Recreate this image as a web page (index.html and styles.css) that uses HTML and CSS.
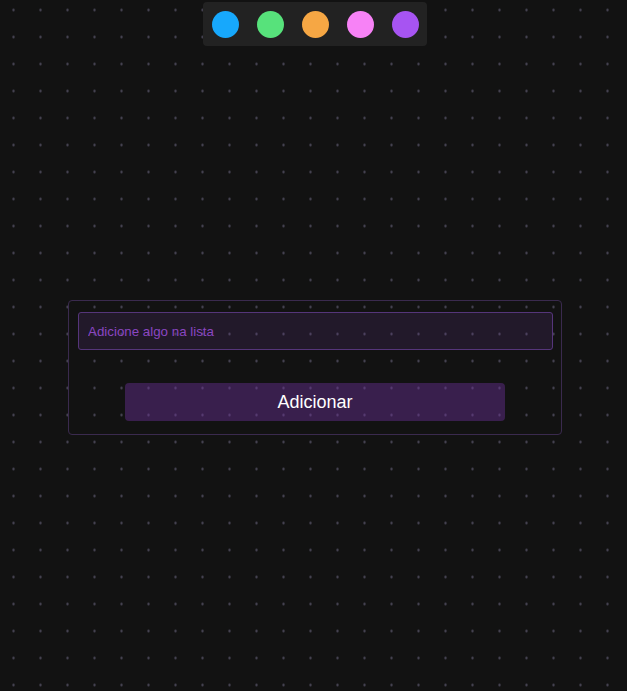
FILE: index.html
```html
<!DOCTYPE html>
<html lang="pt">
<head>
<meta charset="utf-8">
<title>Lista</title>
<link rel="stylesheet" href="styles.css">
</head>
<body>
<div class="page">
  <div class="palette">
    <span class="swatch blue"></span>
    <span class="swatch green"></span>
    <span class="swatch orange"></span>
    <span class="swatch pink"></span>
    <span class="swatch purple"></span>
  </div>
  <form class="card">
    <input class="field" type="text" placeholder="Adicione algo na lista">
    <button class="add" type="button">Adicionar</button>
  </form>
</div>
</body>
</html>
```
FILE: styles.css
```css
html, body {
  margin: 0;
  padding: 0;
  height: 100%;
}
body {
  background-color: #121212;
  background-image: radial-gradient(circle, rgba(100,96,120,0.7) 0.8px, rgba(100,96,120,0.2) 1.3px, transparent 1.8px);
  background-size: 27px 27px;
  background-position: 0px -3.5px;
  font-family: "Liberation Sans", Arial, sans-serif;
}
.page {
  display: flex;
  flex-direction: column;
  align-items: center;
  padding-left: 3px;
  padding-top: 2px;
}
.palette {
  display: flex;
  gap: 18px;
  padding: 8.5px;
  background: #222222;
  border-radius: 4px;
}
.swatch {
  width: 27px;
  height: 27px;
  border-radius: 50%;
  display: block;
}
.blue { background: #17a8fc; }
.green { background: #57e27b; }
.orange { background: #f6a744; }
.pink { background: #f782f6; }
.purple { background: #a754f2; }

.card {
  margin: 254px 0 0 0;
  width: 494px;
  box-sizing: border-box;
  border: 1px solid #3a2a4e;
  border-radius: 4px;
  padding: 11px 8px 13px 9px;
  display: flex;
  flex-direction: column;
  align-items: center;
}
.field {
  width: 100%;
  height: 38px;
  box-sizing: border-box;
  background: rgba(120, 60, 170, 0.16);
  border: 1px solid #55357a;
  border-radius: 3px;
  padding: 0 9px;
  font-family: "Liberation Sans", Arial, sans-serif;
  font-size: 13.333px;
  color: #b07de0;
  outline: none;
}
.field::placeholder {
  color: #8a46c2;
}
.add {
  margin-top: 33px;
  margin-left: -1px;
  width: 380px;
  height: 38px;
  border: none;
  border-radius: 4px;
  background: rgba(112, 50, 160, 0.42);
  color: #ffffff;
  font-family: "Liberation Sans", Arial, sans-serif;
  font-size: 18px;
  cursor: pointer;
}
```
